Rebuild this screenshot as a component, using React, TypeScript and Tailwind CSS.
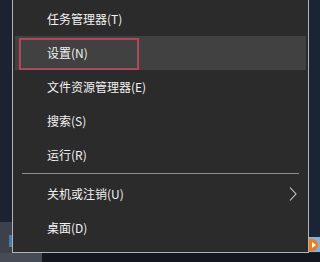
const items: { label: string; sub?: boolean; active?: boolean }[] = [
  { label: "任务管理器(T)" },
  { label: "设置(N)", active: true },
  { label: "文件资源管理器(E)" },
  { label: "搜索(S)" },
  { label: "运行(R)" },
];

const lower: { label: string; sub?: boolean }[] = [
  { label: "关机或注销(U)", sub: true },
  { label: "桌面(D)" },
];

function Row({
  label,
  sub,
  active,
}: {
  label: string;
  sub?: boolean;
  active?: boolean;
}) {
  return (
    <div
      className={
        "relative mx-[2px] flex h-[34px] items-center pl-[32px] pr-[9px] " +
        (active ? "bg-[#414141]" : "")
      }
    >
      <span className="flex-1 text-[12px] text-[#f2f2f2]">{label}</span>
      {sub && (
        <svg width="8" height="14" viewBox="0 0 8 14" className="text-[#d0d0d0]">
          <path d="M1 0.5 L7 7 L1 13.5" fill="none" stroke="currentColor" strokeWidth="1.1" />
        </svg>
      )}
      {active && (
        <div className="absolute left-[4px] top-[2px] z-10 h-[32px] w-[120px] border border-[#d43a56] shadow-[inset_0_0_0_1px_rgba(220,120,140,0.45)]" />
      )}
    </div>
  );
}

export default function App() {
  return (
    <div
      className="flex h-[262px] w-[320px] flex-col overflow-hidden bg-[#151920]"
      style={{ fontFamily: '"Noto Sans CJK SC", "Noto Sans", sans-serif' }}
    >
      <div className="flex h-[253px]">
        <div className="flex w-[12px] flex-col">
          <div className="flex-1 bg-[#1c2330]" />
          <div className="flex h-[31px] items-end justify-end bg-[#3c414b] pb-[6px]">
            <div className="h-[12px] w-[3px] bg-[#4a7aa8]" />
          </div>
        </div>
        <div className="flex w-[297px] flex-col border-x border-b border-[#b4b4b4] bg-[#2b2b2b] pt-[2px]">
          {items.map((it) => (
            <Row key={it.label} {...it} />
          ))}
          <div className="h-[5px] px-[9px] pt-[1px]">
            <div className="h-px bg-[#8c8c8c]" />
          </div>
          {lower.map((it) => (
            <Row key={it.label} {...it} />
          ))}
        </div>
        <div className="flex flex-1 flex-col bg-[#1a2434]">
          <div className="flex-1" />
          <div className="mb-[1px] flex h-[15px] items-center bg-[#7fb3de]">
            <div className="flex h-[12px] w-[9px] items-center justify-center rounded-r-full bg-[#f07a1c]">
              <div className="h-0 w-0 border-y-[3px] border-l-[4px] border-y-transparent border-l-white" />
            </div>
          </div>
        </div>
      </div>
      <div className="flex flex-1">
        <div className="w-[42px] bg-[#474b55]" />
        <div className="flex-1 bg-[#14171e]" />
      </div>
    </div>
  );
}
